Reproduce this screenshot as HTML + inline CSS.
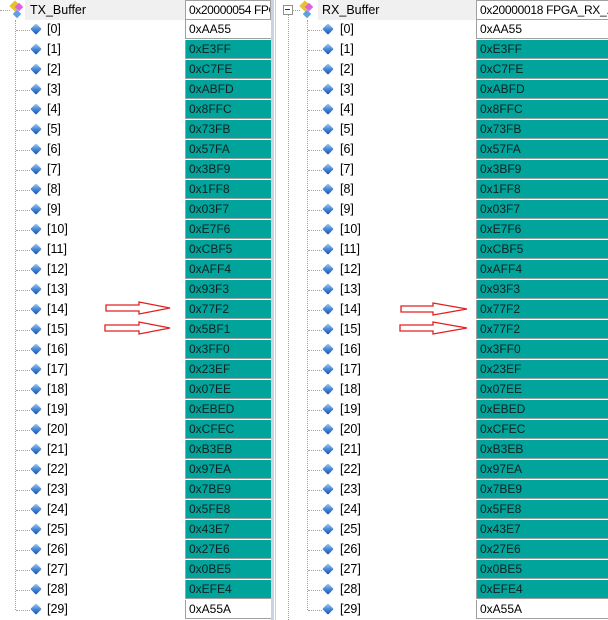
<!DOCTYPE html>
<html><head><meta charset="utf-8"><style>
body{margin:0;width:608px;height:620px;background:#fff;position:relative;overflow:hidden;font-family:"Liberation Sans",sans-serif;font-size:12px;color:#000}
div{position:absolute}
.c{height:19px;line-height:19px;padding-left:3px;box-sizing:border-box;border-bottom:1px solid #a0a0a0}
.t{background:#00a49b;color:#102020}
.w{background:#fff}
.l{line-height:20px;height:20px;font-size:12.5px}
.vd{border-left:1px dotted #a0a0a0;width:0}
.hd{border-top:1px dotted #a0a0a0;height:0}
.dm{width:8px;height:8px;background:linear-gradient(135deg,#a8d0f4 0%,#4a8ad8 50%,#1a50a8 100%);transform:rotate(45deg);border-radius:1px}
</style></head><body>
<div style="left:25px;top:0;width:160px;height:20px;background:#f0f0f0"></div>
<div class="l" style="left:30px;top:0px">TX_Buffer</div>
<div class="hd" style="left:0;top:10px;width:10px"></div>
<div style="left:11px;top:2px;width:8px;height:8px;background:#e8c030;transform:rotate(45deg)"></div>
<div style="left:16px;top:4px;width:6px;height:6px;background:#e060e0;transform:rotate(45deg)"></div>
<div style="left:14px;top:11px;width:6px;height:6px;background:#60a0e0;transform:rotate(45deg)"></div>
<div class="vd" style="left:15px;top:20px;height:590px"></div>
<div style="left:185px;top:0;width:86px;height:20px;border:1px solid #a0a0a0;box-sizing:border-box;background:#fff;line-height:18px;padding-left:3px;overflow:hidden;white-space:nowrap;letter-spacing:-0.4px">0x20000054 FPGA</div>
<div style="left:271px;top:0;width:3px;height:620px;background:#c8d4e0"></div>
<div style="left:275px;top:0;width:1px;height:620px;background:#d0d0d0"></div>
<div style="left:318px;top:0;width:158px;height:20px;background:#f0f0f0"></div>
<div style="left:283px;top:5px;width:8px;height:8px;border:1px solid #909090;background:#fff"></div>
<div style="left:285px;top:9px;width:5px;height:1px;background:#333"></div>
<div class="hd" style="left:292px;top:10px;width:8px"></div>
<div class="vd" style="left:288px;top:15px;height:605px"></div>
<div style="left:301px;top:2px;width:8px;height:8px;background:#e8c030;transform:rotate(45deg)"></div>
<div style="left:306px;top:4px;width:6px;height:6px;background:#e060e0;transform:rotate(45deg)"></div>
<div style="left:304px;top:11px;width:6px;height:6px;background:#60a0e0;transform:rotate(45deg)"></div>
<div class="vd" style="left:307px;top:20px;height:590px"></div>
<div class="l" style="left:322px;top:0">RX_Buffer</div>
<div style="left:476px;top:0;width:132px;height:20px;border:1px solid #a0a0a0;border-right:none;box-sizing:border-box;background:#fff;line-height:18px;padding-left:3px;white-space:nowrap;letter-spacing:-0.3px">0x20000018 FPGA_RX_...</div>
<div id="rows"></div>
<svg style="position:absolute;left:0;top:0" width="608" height="620">
<g fill="#fff" stroke="#e02020" stroke-width="1.3">
<polygon points="106,305 139,305 139,302 170,308 139,314 139,311 106,311"/>
<polygon points="105,325 139,325 139,322 170,328 139,334 139,331 105,331"/>
<polygon points="401,306 433,306 433,303 467,309 433,315 433,312 401,312"/>
<polygon points="400,325 433,325 433,322 467,328 433,334 433,331 400,331"/>
</g></svg>
<script>
var v=["AA55","E3FF","C7FE","ABFD","8FFC","73FB","57FA","3BF9","1FF8","03F7","E7F6","CBF5","AFF4","93F3","77F2","5BF1","3FF0","23EF","07EE","EBED","CFEC","B3EB","97EA","7BE9","5FE8","43E7","27E6","0BE5","EFE4","A55A"];
var h="";
for(var i=0;i<30;i++){var y=20+i*20;var cls=(i==0||i==29)?"w":"t";
var rv=(i==15)?"77F2":v[i];
h+='<div class="hd" style="left:16px;top:'+(y+10)+'px;width:14px"></div><div class="dm" style="left:32px;top:'+(y+5)+'px"></div><div class="l" style="left:47px;top:'+(y-1)+'px">['+i+']</div>';
h+='<div class="c '+cls+'" style="left:185px;top:'+y+'px;width:86px;border-left:1px solid #a0a0a0">0x'+v[i]+'</div>';
h+='<div class="hd" style="left:308px;top:'+(y+10)+'px;width:14px"></div><div class="dm" style="left:324px;top:'+(y+5)+'px"></div><div class="l" style="left:340px;top:'+(y-1)+'px">['+i+']</div>';
h+='<div class="c '+cls+'" style="left:476px;top:'+y+'px;width:132px;border-left:1px solid #a0a0a0">0x'+rv+'</div>';}
document.getElementById("rows").outerHTML=h;
</script>
</body></html>
